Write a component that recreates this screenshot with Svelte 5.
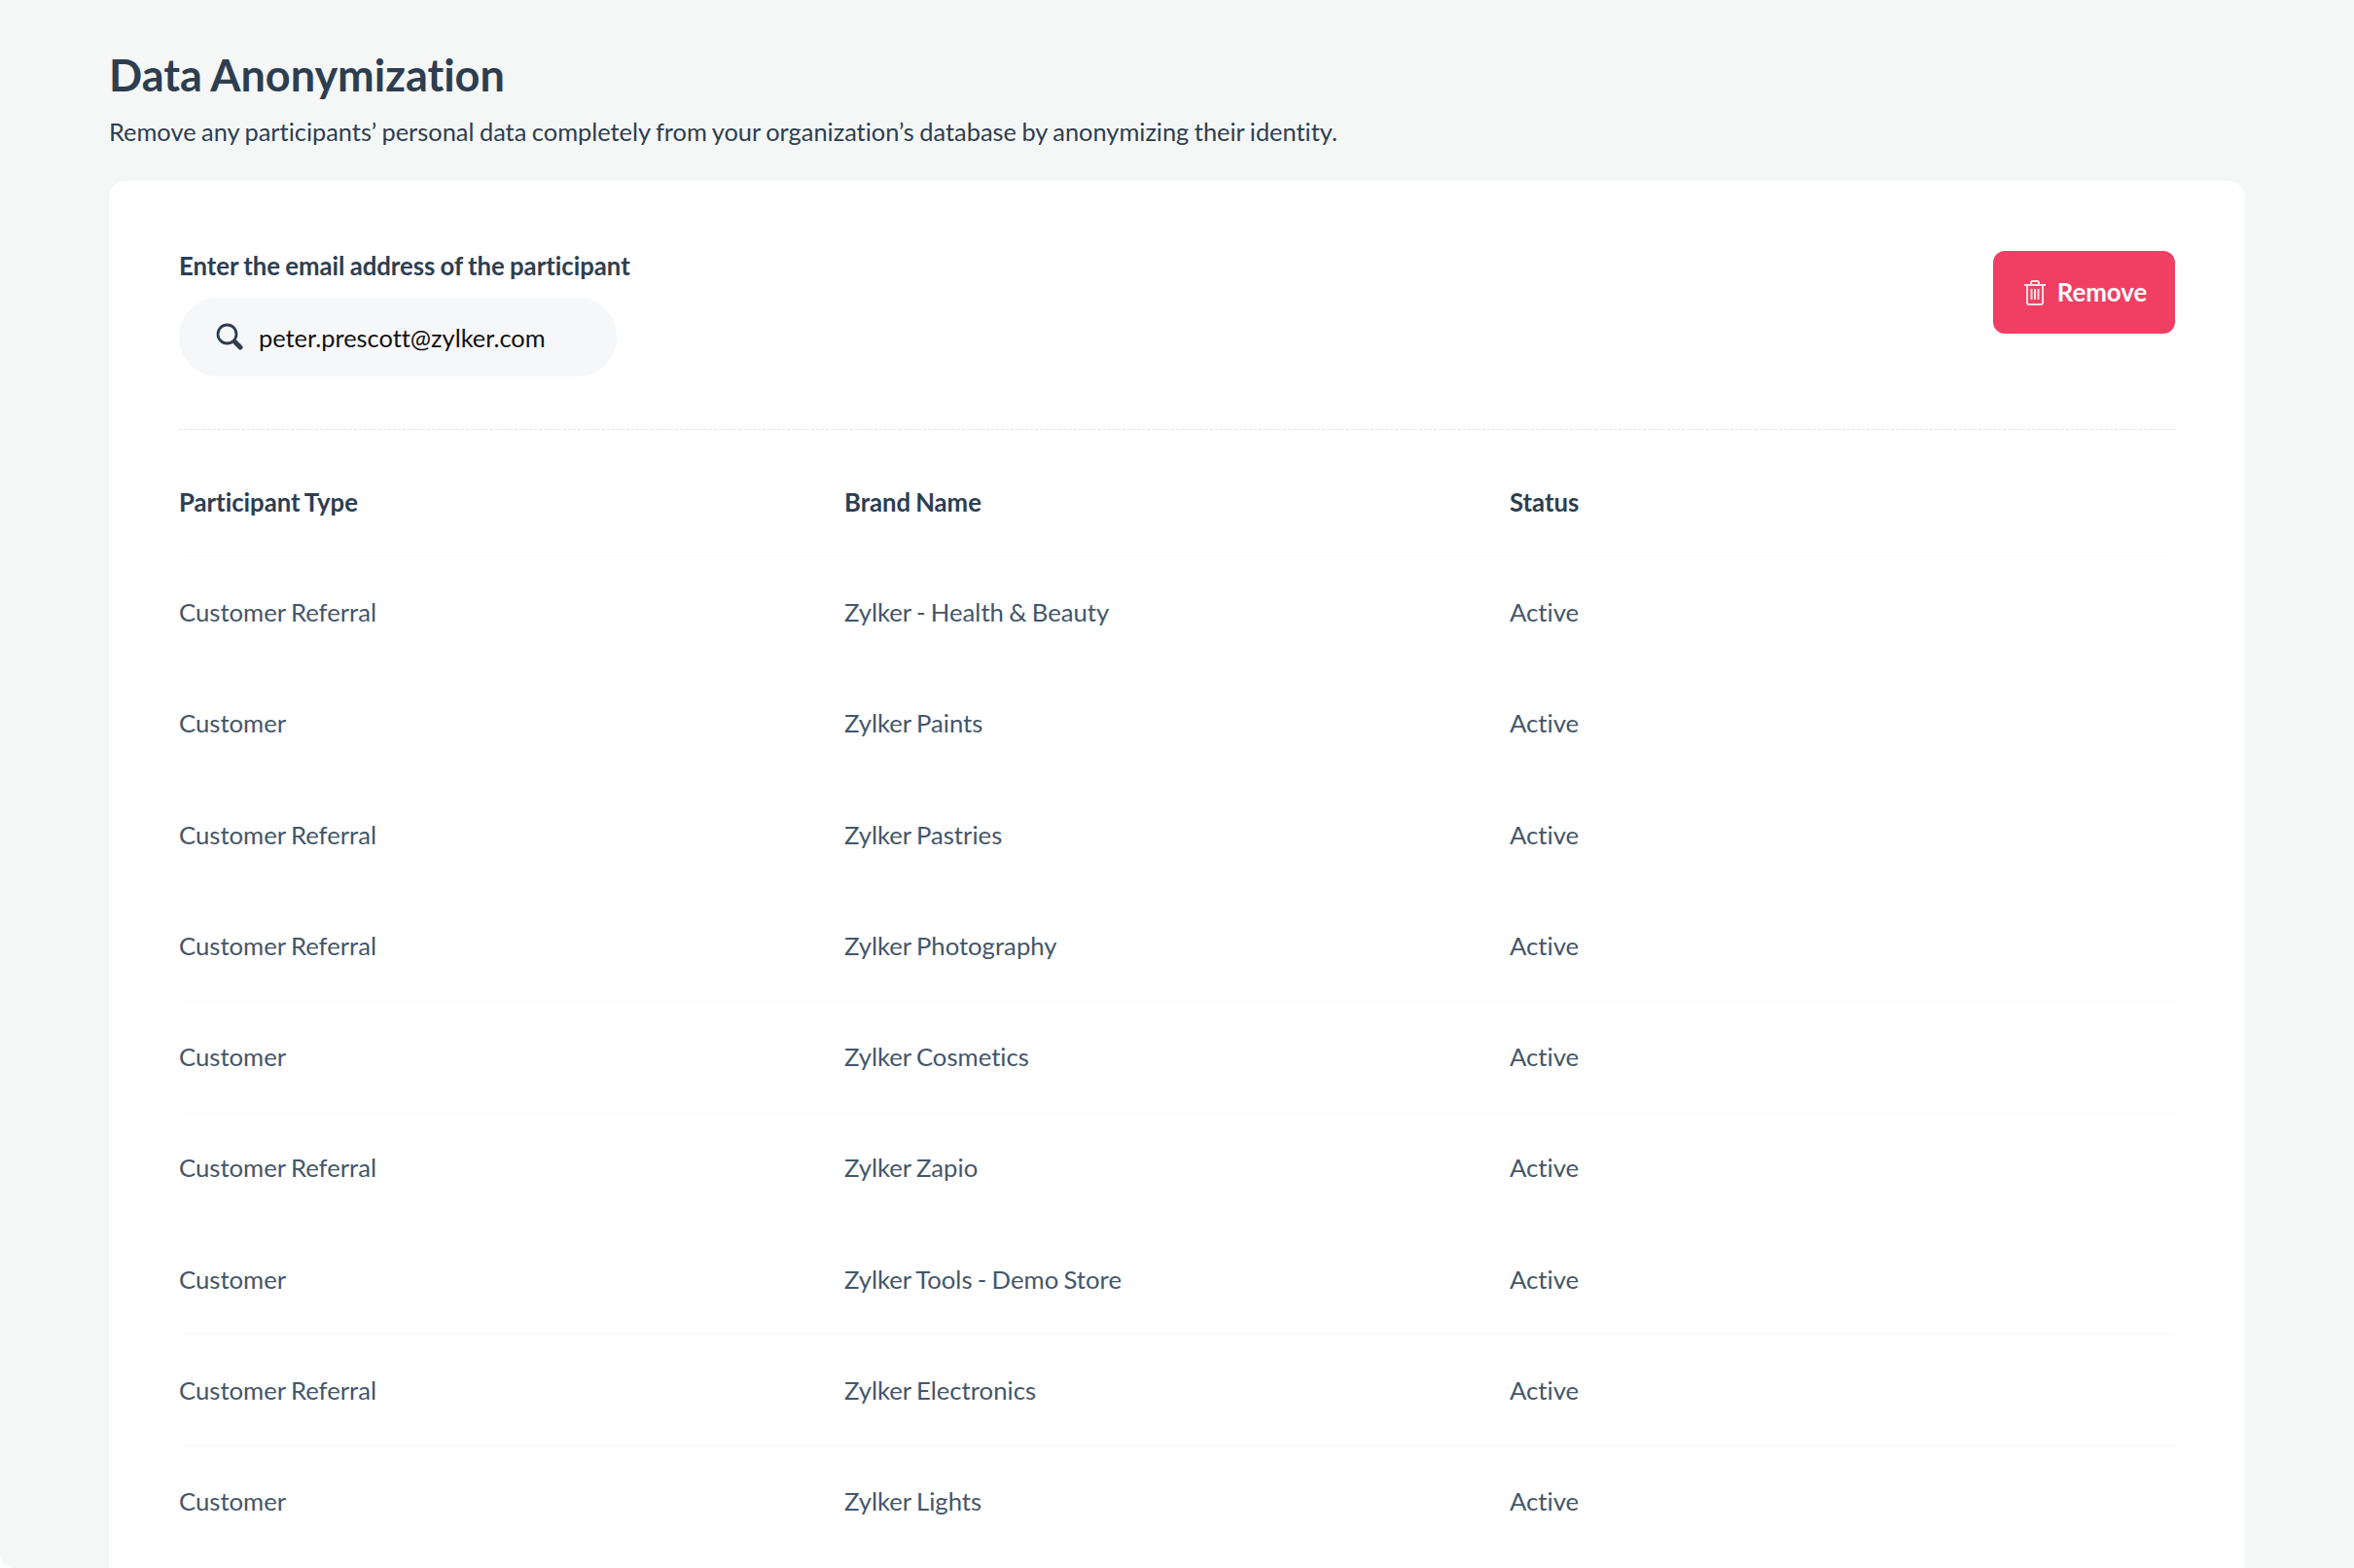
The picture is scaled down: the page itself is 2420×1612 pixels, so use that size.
<script>
  const rows = [
    ['Customer Referral', 'Zylker - Health & Beauty'],
    ['Customer', 'Zylker Paints'],
    ['Customer Referral', 'Zylker Pastries'],
    ['Customer Referral', 'Zylker Photography'],
    ['Customer', 'Zylker Cosmetics'],
    ['Customer Referral', 'Zylker Zapio'],
    ['Customer', 'Zylker Tools - Demo Store'],
    ['Customer Referral', 'Zylker Electronics'],
    ['Customer', 'Zylker Lights']
  ];
</script>

<div class="page">
  <h1>Data Anonymization</h1>
  <p class="sub">Remove any participants’ personal data completely from your organization’s database by anonymizing their identity.</p>
  <section class="card">
    <div class="top">
      <div>
        <div class="label">Enter the email address of the participant</div>
        <div class="search">
          <svg width="28" height="28" viewBox="0 0 28 28" fill="none">
            <circle cx="11.500" cy="11.500" r="9.500" stroke="#2d3e50" stroke-width="2.800"/>
            <path d="M20 20l5 5" stroke="#2d3e50" stroke-width="5" stroke-linecap="round"/>
          </svg>
          <span>peter.prescott@zylker.com</span>
        </div>
      </div>
      <button>
        <svg width="22" height="26" viewBox="0 0 22 26" fill="none" stroke="#f3dfe3" stroke-width="2">
          <path d="M0 5h22M7 5V2.500Q7 1 8.500 1h5Q15 1 15 2.500V5M3 5v18q0 2 2 2h12q2 0 2-2V5M7.500 9v11M11 9v11M14.500 9v11"/>
        </svg>
        <span class="btn-text">Remove</span>
      </button>
    </div>
    <div class="table">
      <div class="row head"><div>Participant Type</div><div>Brand Name</div><div>Status</div></div>
      {#each rows as r}
        <div class="row"><div>{r[0]}</div><div>{r[1]}</div><div>Active</div></div>
      {/each}
    </div>
  </section>
</div>

<style>
  :global(body) { margin: 0; background: #fff; }
  .page {
    box-sizing: border-box;
    height: 1612px;
    overflow: hidden;
    padding: 50px 112px 0;
    background: #f5f7f6;
    border-bottom-left-radius: 14px;
    font-family: Lato, "Liberation Sans", sans-serif;
    font-variant-ligatures: none;
    word-spacing: -1px;
    color: #2d3e50;
  }
  h1 { margin: 0; font-size: 45px; line-height: 54px; font-weight: 700; word-spacing: -1px; }
  .sub { margin: 14px 0 0; font-size: 25.400px; line-height: 34px; font-weight: 400; }
  .card {
    margin-top: 34px;
    background: #fff;
    border-radius: 18px;
    padding: 72px 72px 0;
    height: 1500px;
  }
  .top {
    display: flex;
    justify-content: space-between;
    align-items: flex-start;
    height: 183px;
    padding-bottom: 1px;
    background: repeating-linear-gradient(90deg, #e0e2e4 0 3px, transparent 3px 5px) left bottom / 100% 1px no-repeat;
  }
  .label { font-size: 25.700px; font-weight: 700; line-height: 30px; }
  .search {
    margin-top: 18px;
    width: 450px;
    height: 81px;
    box-sizing: border-box;
    border-radius: 40px;
    background: #f6f7f9;
    display: flex;
    align-items: center;
    padding-left: 38px;
    gap: 16px;
    font-size: 25.400px;
    color: #111;
  }
  .search svg { margin-top: -2px; }
  button {
    width: 187px;
    height: 85px;
    border: 0;
    border-radius: 12px;
    background: #f13f63;
    color: #fff;
    font: 700 25.800px Lato, sans-serif;
    font-variant-ligatures: none;
    display: flex;
    align-items: center;
    justify-content: center;
    gap: 12px;
    padding: 0 0 0 3px;
  }
  .btn-text { margin-top: -1px; }
  .table { margin-top: 16px; }
  .row {
    display: grid;
    grid-template-columns: 684px 684px 1fr;
    height: 114.300px;
    box-sizing: border-box;
    border-bottom: 1px solid #fafbfb;
    align-items: center;
    font-size: 25.700px;
    word-spacing: -1.300px;
    color: #44566a;
  }
  .head { font-weight: 700; color: #2d3e50; padding-top: 2px; }
</style>
